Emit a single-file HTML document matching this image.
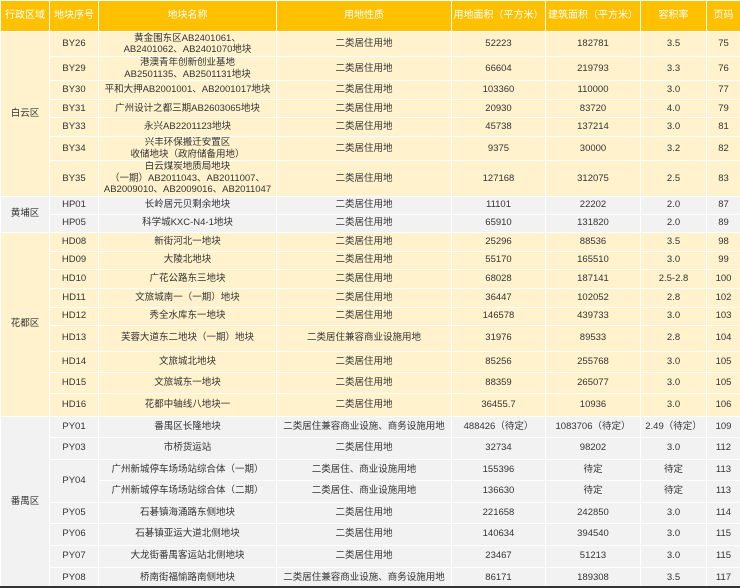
<!DOCTYPE html>
<html><head><meta charset="utf-8"><style>
html,body{margin:0;padding:0;background:#fff;width:740px;height:588px;overflow:hidden}
table{border-collapse:collapse;table-layout:fixed;width:740px;font-family:"Liberation Sans","Noto Sans CJK SC",sans-serif;font-size:9.5px;color:#333;line-height:11.5px}
td,th{border:1.5px solid #fff;text-align:center;padding:0;overflow:hidden;white-space:nowrap}
th{background:#FFC000;color:#fff;font-weight:normal;font-size:10px;height:30px}
.y td{background:#FFF2CC}
.g td{background:#F2F2F2}
.bot{position:absolute;left:0;top:586px;width:740px;height:2px;background:#333}
</style></head><body>
<table>
<colgroup><col style="width:49px"><col style="width:49px"><col style="width:178px"><col style="width:175px"><col style="width:94px"><col style="width:95px"><col style="width:66px"><col style="width:34px"></colgroup>
<tr><th>行政区域</th><th>地块序号</th><th>地块名称</th><th>用地性质</th><th>用地面积（平方米）</th><th>建筑面积（平方米）</th><th>容积率</th><th>页码</th></tr>
<tr class="y" style="height:25px"><td rowspan="7">白云区</td><td>BY26</td><td>黄金围东区AB2401061、<br>AB2401062、AB2401070地块</td><td>二类居住用地</td><td>52223</td><td>182781</td><td>3.5</td><td>75</td></tr>
<tr class="y" style="height:23px"><td>BY29</td><td>港澳青年创新创业基地<br>AB2501135、AB2501131地块</td><td>二类居住用地</td><td>66604</td><td>219793</td><td>3.3</td><td>76</td></tr>
<tr class="y" style="height:19px"><td>BY30</td><td>平和大押AB2001001、AB2001017地块</td><td>二类居住用地</td><td>103360</td><td>110000</td><td>3.0</td><td>77</td></tr>
<tr class="y" style="height:18px"><td>BY31</td><td>广州设计之都三期AB2603065地块</td><td>二类居住用地</td><td>20930</td><td>83720</td><td>4.0</td><td>79</td></tr>
<tr class="y" style="height:19px"><td>BY33</td><td>永兴AB2201123地块</td><td>二类居住用地</td><td>45738</td><td>137214</td><td>3.0</td><td>81</td></tr>
<tr class="y" style="height:24px"><td>BY34</td><td>兴丰环保搬迁安置区<br>收储地块（政府储备用地）</td><td>二类居住用地</td><td>9375</td><td>30000</td><td>3.2</td><td>82</td></tr>
<tr class="y" style="height:35px"><td>BY35</td><td>白云煤炭地质局地块<br>（一期）AB2011043、AB2011007、<br>AB2009010、AB2009016、AB2011047</td><td>二类居住用地</td><td>127168</td><td>312075</td><td>2.5</td><td>83</td></tr>
<tr class="g" style="height:18px"><td rowspan="2">黄埔区</td><td>HP01</td><td>长岭居元贝剩余地块</td><td>二类居住用地</td><td>11101</td><td>22202</td><td>2.0</td><td>87</td></tr>
<tr class="g" style="height:18px"><td>HP05</td><td>科学城KXC-N4-1地块</td><td>二类居住用地</td><td>65910</td><td>131820</td><td>2.0</td><td>89</td></tr>
<tr class="y" style="height:19px"><td rowspan="9">花都区</td><td>HD08</td><td>新街河北一地块</td><td>二类居住用地</td><td>25296</td><td>88536</td><td>3.5</td><td>98</td></tr>
<tr class="y" style="height:18px"><td>HD09</td><td>大陵北地块</td><td>二类居住用地</td><td>55170</td><td>165510</td><td>3.0</td><td>99</td></tr>
<tr class="y" style="height:19px"><td>HD10</td><td>广花公路东三地块</td><td>二类居住用地</td><td>68028</td><td>187141</td><td>2.5-2.8</td><td>100</td></tr>
<tr class="y" style="height:19px"><td>HD11</td><td>文旅城南一（一期）地块</td><td>二类居住用地</td><td>36447</td><td>102052</td><td>2.8</td><td>102</td></tr>
<tr class="y" style="height:18px"><td>HD12</td><td>秀全水库东一地块</td><td>二类居住用地</td><td>146578</td><td>439733</td><td>3.0</td><td>103</td></tr>
<tr class="y" style="height:26px"><td>HD13</td><td>芙蓉大道东二地块（一期）地块</td><td>二类居住兼容商业设施用地</td><td>31976</td><td>89533</td><td>2.8</td><td>104</td></tr>
<tr class="y" style="height:21px"><td>HD14</td><td>文旅城北地块</td><td>二类居住用地</td><td>85256</td><td>255768</td><td>3.0</td><td>105</td></tr>
<tr class="y" style="height:21px"><td>HD15</td><td>文旅城东一地块</td><td>二类居住用地</td><td>88359</td><td>265077</td><td>3.0</td><td>105</td></tr>
<tr class="y" style="height:23px"><td>HD16</td><td>花都中轴线八地块一</td><td>二类居住用地</td><td>36455.7</td><td>10936</td><td>3.0</td><td>106</td></tr>
<tr class="g" style="height:21px"><td rowspan="9">番禺区</td><td>PY01</td><td>番禺区长隆地块</td><td>二类居住兼容商业设施、商务设施用地</td><td>488426（待定）</td><td>1083706（待定）</td><td>2.49（待定）</td><td>109</td></tr>
<tr class="g" style="height:22px"><td>PY03</td><td>市桥货运站</td><td>二类居住用地</td><td>32734</td><td>98202</td><td>3.0</td><td>112</td></tr>
<tr class="g" style="height:21px"><td rowspan="2">PY04</td><td>广州新城停车场场站综合体（一期）</td><td>二类居住、商业设施用地</td><td>155396</td><td>待定</td><td>待定</td><td>113</td></tr>
<tr class="g" style="height:22px"><td>广州新城停车场场站综合体（二期）</td><td>二类居住、商业设施用地</td><td>136630</td><td>待定</td><td>待定</td><td>113</td></tr>
<tr class="g" style="height:21px"><td>PY05</td><td>石碁镇海涌路东侧地块</td><td>二类居住用地</td><td>221658</td><td>242850</td><td>3.0</td><td>114</td></tr>
<tr class="g" style="height:22px"><td>PY06</td><td>石碁镇亚运大道北侧地块</td><td>二类居住用地</td><td>140634</td><td>394540</td><td>3.0</td><td>115</td></tr>
<tr class="g" style="height:22px"><td>PY07</td><td>大龙街番禺客运站北侧地块</td><td>二类居住用地</td><td>23467</td><td>51213</td><td>3.0</td><td>115</td></tr>
<tr class="g" style="height:21px"><td>PY08</td><td>桥南街福愉路南侧地块</td><td>二类居住兼容商业设施、商务设施用地</td><td>86171</td><td>189308</td><td>3.5</td><td>117</td></tr>
</table>
<div class="bot"></div>
</body></html>
